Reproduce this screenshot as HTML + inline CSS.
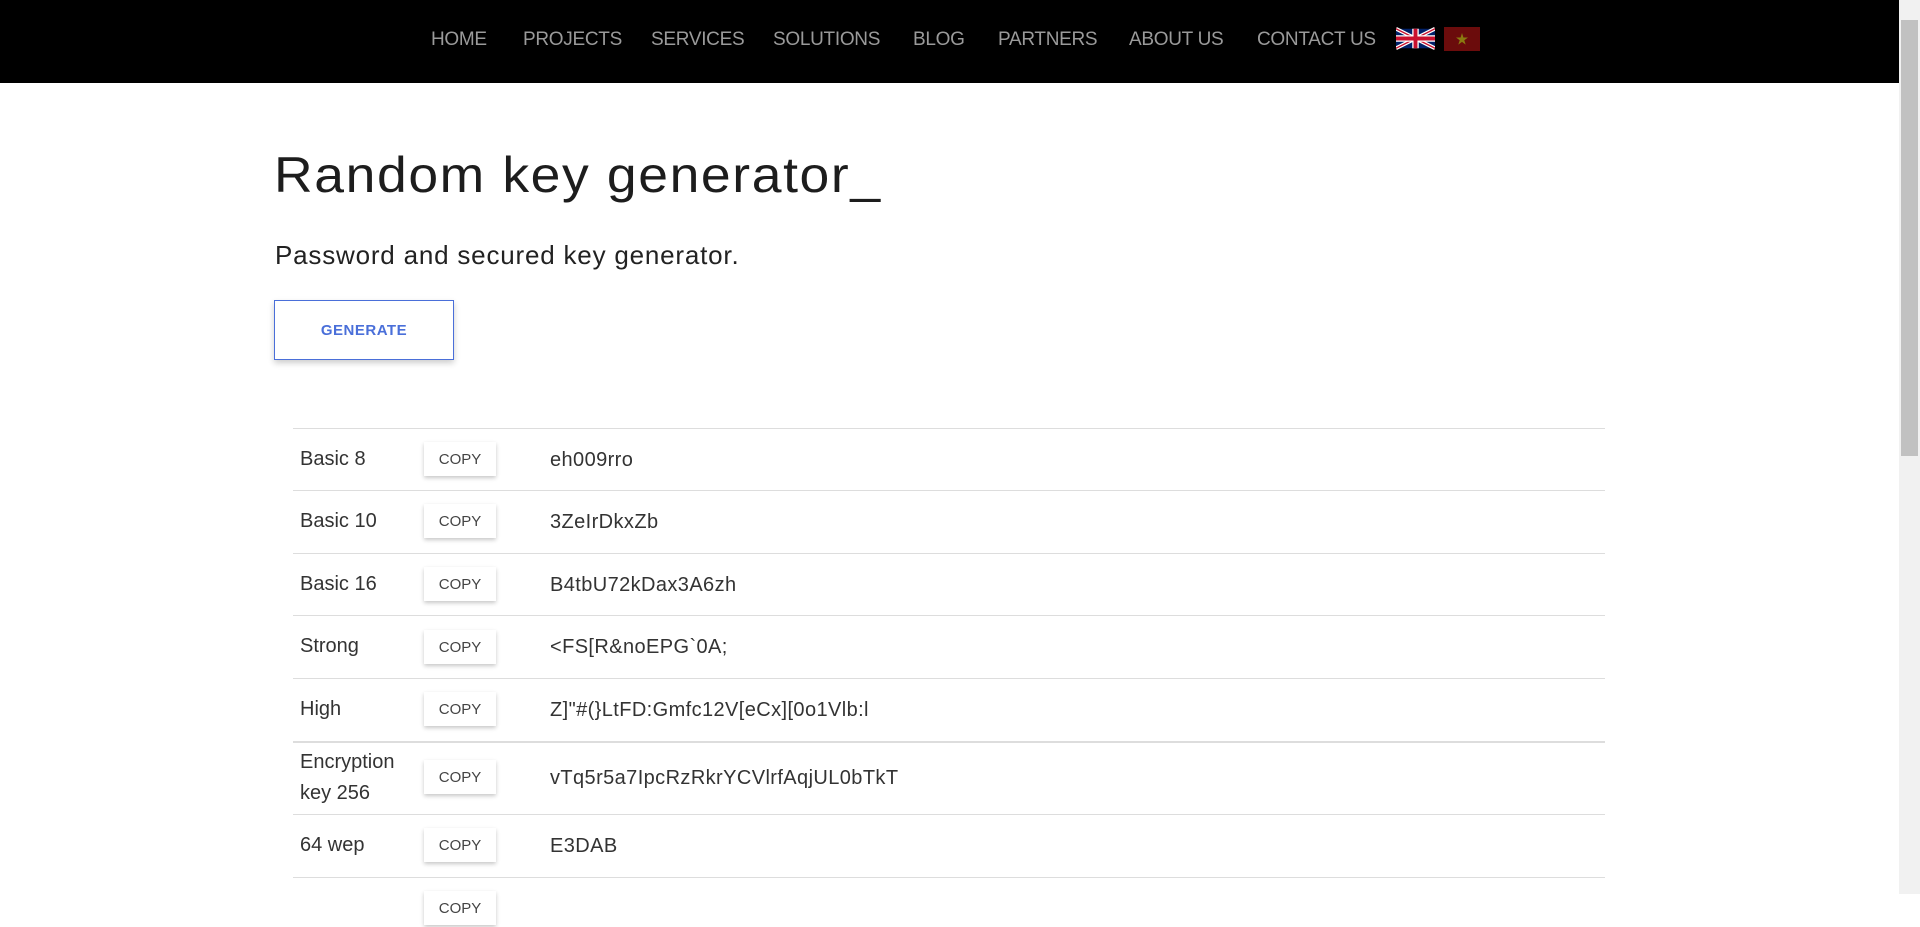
<!DOCTYPE html>
<html><head><meta charset="utf-8"><style>
*{margin:0;padding:0;box-sizing:border-box}
body{width:1920px;height:894px;overflow:hidden;background:#fff;font-family:"Liberation Sans",sans-serif;color:#222;position:relative}
nav{position:absolute;left:0;top:0;width:1899px;height:83px;background:#000}
nav a{position:absolute;top:29px;font-size:19px;color:#9a9a9a;text-decoration:none;letter-spacing:-0.3px;line-height:22px}
.sb{position:absolute;right:0;top:0;width:21px;height:894px;background:#f1f1f1}
.th{position:absolute;left:2px;top:20px;width:17px;height:436px;background:#c1c1c1}
h1{position:absolute;left:274px;top:146px;font-size:50px;font-weight:normal;letter-spacing:1.5px;color:#1d1d1d;transform:scaleX(1.07);transform-origin:left}
.sub{position:absolute;left:275px;top:240px;font-size:26px;letter-spacing:0.8px;color:#222}
.btn{position:absolute;left:274px;top:300px;width:180px;height:60px;border:1px solid #4a6fd9;box-shadow:0 3px 6px rgba(0,0,0,.2);color:#4a6fd9;font-size:15px;font-weight:bold;text-align:center;line-height:60px;letter-spacing:.5px}
.line{position:absolute;left:293px;width:1312px;height:1px;background:#ddd}
.lab{position:absolute;left:300px;font-size:20px;color:#333;line-height:31px}
.cp{position:absolute;left:424px;width:72px;height:34px;background:#fff;box-shadow:0 2px 4px rgba(0,0,0,.22);font-size:15px;color:#444;text-align:center;line-height:36px}
.val{position:absolute;left:550px;font-size:20px;color:#333;letter-spacing:0.4px}
</style></head><body>
<nav>
<a style="left:431px">HOME</a>
<a style="left:523px">PROJECTS</a>
<a style="left:651px">SERVICES</a>
<a style="left:773px">SOLUTIONS</a>
<a style="left:913px">BLOG</a>
<a style="left:998px">PARTNERS</a>
<a style="left:1129px">ABOUT US</a>
<a style="left:1257px">CONTACT US</a>
<svg style="position:absolute;left:1396px;top:26px" width="39" height="25" viewBox="0 0 60 30"><rect width="60" height="30" fill="#012169"/><path d="M0,0L60,30M60,0L0,30" stroke="#fff" stroke-width="6"/><path d="M0,0L60,30M60,0L0,30" stroke="#C8102E" stroke-width="2"/><path d="M30,0V30M0,15H60" stroke="#fff" stroke-width="10"/><path d="M30,0V30M0,15H60" stroke="#C8102E" stroke-width="6"/></svg>
<svg style="position:absolute;left:1444px;top:27px" width="36" height="24" viewBox="0 0 36 24"><rect width="36" height="24" fill="#6b0c0c"/><polygon points="18,6 19.4,10.5 24,10.5 20.3,13.2 21.7,17.6 18,14.9 14.3,17.6 15.7,13.2 12,10.5 16.6,10.5" fill="#8a7a10"/></svg>
</nav>
<div class="sb"><div class="th"></div></div>
<h1>Random key generator_</h1>
<div class="sub">Password and secured key generator.</div>
<div class="btn">GENERATE</div>

<div class="line" style="top:428px"></div>
<div class="lab" style="top:444px">Basic 8</div><div class="cp" style="top:442px">COPY</div><div class="val" style="top:449px">eh009rro</div>
<div class="line" style="top:490px"></div>
<div class="lab" style="top:506px">Basic 10</div><div class="cp" style="top:504px">COPY</div><div class="val" style="top:511px">3ZeIrDkxZb</div>
<div class="line" style="top:553px"></div>
<div class="lab" style="top:569px">Basic 16</div><div class="cp" style="top:567px">COPY</div><div class="val" style="top:574px">B4tbU72kDax3A6zh</div>
<div class="line" style="top:615px"></div>
<div class="lab" style="top:631px">Strong</div><div class="cp" style="top:630px">COPY</div><div class="val" style="top:636px">&lt;FS[R&amp;noEPG`0A;</div>
<div class="line" style="top:678px"></div>
<div class="lab" style="top:694px">High</div><div class="cp" style="top:692px">COPY</div><div class="val" style="top:699px">Z]"#(}LtFD:Gmfc12V[eCx][0o1Vlb:l</div>
<div class="line" style="top:741px;height:2px"></div>
<div class="lab" style="top:747px">Encryption<br>key 256</div><div class="cp" style="top:760px">COPY</div><div class="val" style="top:767px">vTq5r5a7IpcRzRkrYCVlrfAqjUL0bTkT</div>
<div class="line" style="top:814px"></div>
<div class="lab" style="top:830px">64 wep</div><div class="cp" style="top:828px">COPY</div><div class="val" style="top:835px">E3DAB</div>
<div class="line" style="top:877px"></div>
<div class="cp" style="top:891px">COPY</div>
</body></html>
